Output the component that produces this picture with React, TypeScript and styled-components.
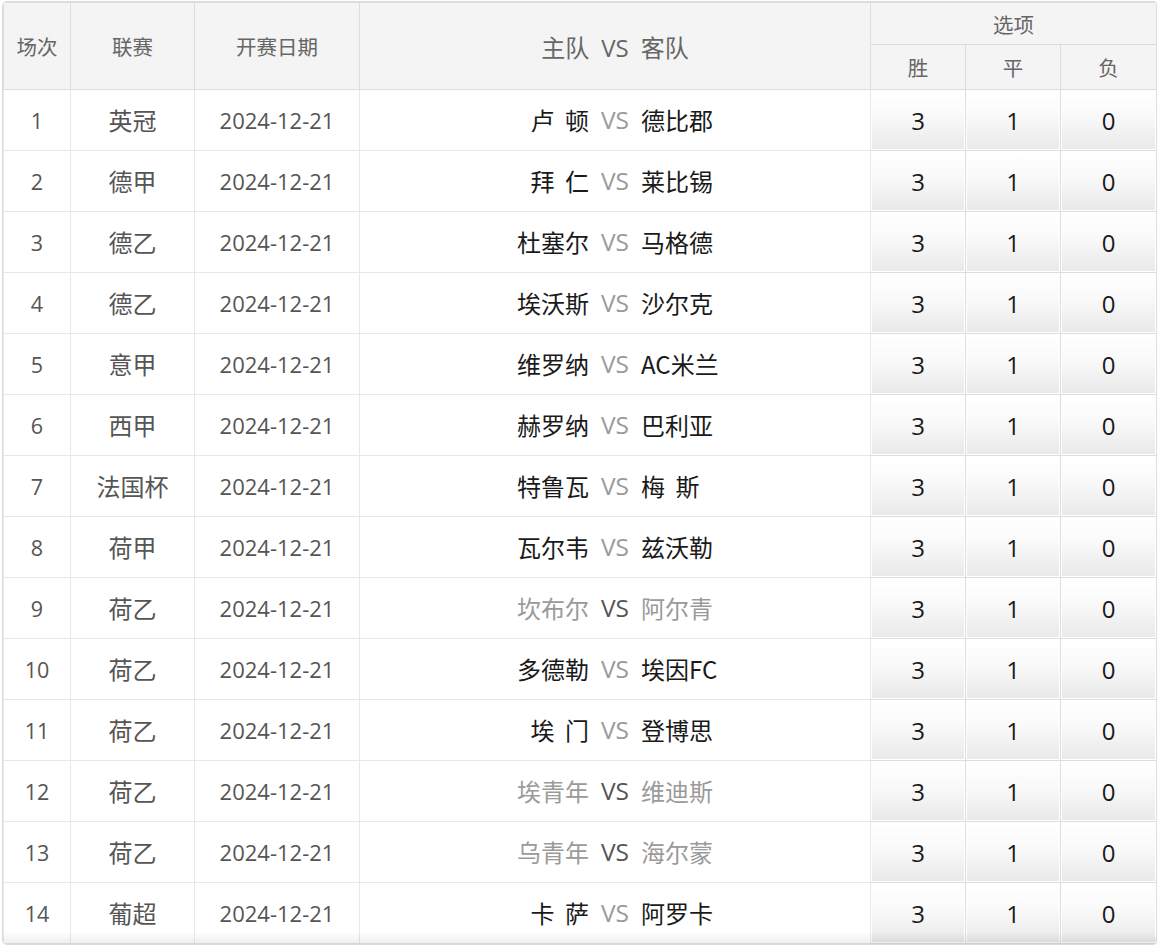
import React from "react";
import styled, { createGlobalStyle } from "styled-components";

const Global = createGlobalStyle`
  html, body { margin: 0; padding: 0; background: #fff; }
  body { font-family: "Microsoft YaHei", "Noto Sans CJK SC", "Noto Sans", sans-serif; }
`;

const Wrap = styled.div`
  padding: 1px 1px 3px 2px;
`;

const Frame = styled.div`
  width: 1154px;
  border: 1px solid #dcdcdc;
  border-radius: 5px;
  overflow: hidden;
  position: relative;
  background: #fff;
`;

const Fade = styled.div`
  position: absolute;
  left: 0;
  right: 0;
  bottom: 0;
  height: 12px;
  pointer-events: none;
  background: linear-gradient(rgba(0, 0, 0, 0), rgba(0, 0, 0, 0.07));
`;

const Table = styled.table`
  width: 100%;
  border-collapse: collapse;
  table-layout: fixed;
`;

const Th = styled.th<{ $h?: number; $big?: boolean }>`
  background: #f4f4f4;
  color: #666;
  font-weight: normal;
  font-size: ${(p) => (p.$big ? 24 : 20.5)}px;
  height: ${(p) => p.$h ?? 40}px;
  padding: 0;
  border: 1px solid #dddddd;
  text-align: center;
  vertical-align: middle;
`;

const Td = styled.td<{ $size?: number; $color?: string }>`
  height: 58px;
  padding: 0 0 2px;
  border: 1px solid #e8e8e8;
  text-align: center;
  vertical-align: middle;
  font-size: ${(p) => p.$size ?? 22}px;
  color: ${(p) => p.$color ?? "#555"};
`;

const OptTd = styled.td`
  height: 60px;
  padding: 0;
  border: 1px solid #dddddd;
`;

const OptBtn = styled.div`
  margin: 1px;
  height: 58px;
  display: flex;
  align-items: center;
  justify-content: center;
  font-size: 24px;
  color: #1a1a1a;
  background: linear-gradient(#ffffff 0%, #fafafa 40%, #e9e9e9 100%);
`;

const Match = styled.div`
  display: flex;
  align-items: center;
  justify-content: center;
  gap: 12px;
  font-size: 24px;
`;

const Team = styled.span<{ $side: "home" | "away"; $dim: boolean }>`
  flex: 1;
  text-align: ${(p) => (p.$side === "home" ? "right" : "left")};
  color: ${(p) => (p.$dim ? "#9a9a9a" : "#1a1a1a")};
  white-space: pre;
  word-spacing: 5px;
`;

const Vs = styled.span<{ $dim: boolean }>`
  color: ${(p) => (p.$dim ? "#555" : "#9a9a9a")};
  font-family: "Open Sans", "Noto Sans", sans-serif;
  font-size: 24.5px;
`;

const HeadVs = styled.span`
  margin: 0 12px;
  font-family: "Open Sans", "Noto Sans", sans-serif;
`;

const Num = styled.span`
  font-family: "Open Sans", "Noto Sans", sans-serif;
`;

type Row = { no: number; league: string; home: string; away: string; dim?: boolean };

const rows: Row[] = [
  { no: 1, league: "英冠", home: "卢 顿", away: "德比郡" },
  { no: 2, league: "德甲", home: "拜 仁", away: "莱比锡" },
  { no: 3, league: "德乙", home: "杜塞尔", away: "马格德" },
  { no: 4, league: "德乙", home: "埃沃斯", away: "沙尔克" },
  { no: 5, league: "意甲", home: "维罗纳", away: "AC米兰" },
  { no: 6, league: "西甲", home: "赫罗纳", away: "巴利亚" },
  { no: 7, league: "法国杯", home: "特鲁瓦", away: "梅 斯" },
  { no: 8, league: "荷甲", home: "瓦尔韦", away: "兹沃勒" },
  { no: 9, league: "荷乙", home: "坎布尔", away: "阿尔青", dim: true },
  { no: 10, league: "荷乙", home: "多德勒", away: "埃因FC" },
  { no: 11, league: "荷乙", home: "埃 门", away: "登博思" },
  { no: 12, league: "荷乙", home: "埃青年", away: "维迪斯", dim: true },
  { no: 13, league: "荷乙", home: "乌青年", away: "海尔蒙", dim: true },
  { no: 14, league: "葡超", home: "卡 萨", away: "阿罗卡" },
];

export default function App() {
  return (
    <>
      <Global />
      <Wrap>
        <Frame>
          <Table>
            <colgroup>
              <col style={{ width: 67 }} />
              <col style={{ width: 124 }} />
              <col style={{ width: 165 }} />
              <col style={{ width: 511 }} />
              <col style={{ width: 95 }} />
              <col style={{ width: 95 }} />
              <col />
            </colgroup>
            <thead>
              <tr>
                <Th rowSpan={2}>场次</Th>
                <Th rowSpan={2}>联赛</Th>
                <Th rowSpan={2}>开赛日期</Th>
                <Th rowSpan={2} $big>
                  主队<HeadVs>VS</HeadVs>客队
                </Th>
                <Th colSpan={3} $h={41}>
                  选项
                </Th>
              </tr>
              <tr>
                <Th $h={44}>胜</Th>
                <Th $h={44}>平</Th>
                <Th $h={44}>负</Th>
              </tr>
            </thead>
            <tbody>
              {rows.map((r) => (
                <tr key={r.no}>
                  <Td $size={21.5}>
                    <Num>{r.no}</Num>
                  </Td>
                  <Td $size={24}>{r.league}</Td>
                  <Td $size={22}>
                    <Num>2024-12-21</Num>
                  </Td>
                  <Td>
                    <Match>
                      <Team $side="home" $dim={!!r.dim}>
                        {r.home}
                      </Team>
                      <Vs $dim={!!r.dim}>VS</Vs>
                      <Team $side="away" $dim={!!r.dim}>
                        {r.away}
                      </Team>
                    </Match>
                  </Td>
                  {["3", "1", "0"].map((v) => (
                    <OptTd key={v}>
                      <OptBtn>
                        <Num>{v}</Num>
                      </OptBtn>
                    </OptTd>
                  ))}
                </tr>
              ))}
            </tbody>
          </Table>
          <Fade />
        </Frame>
      </Wrap>
    </>
  );
}
